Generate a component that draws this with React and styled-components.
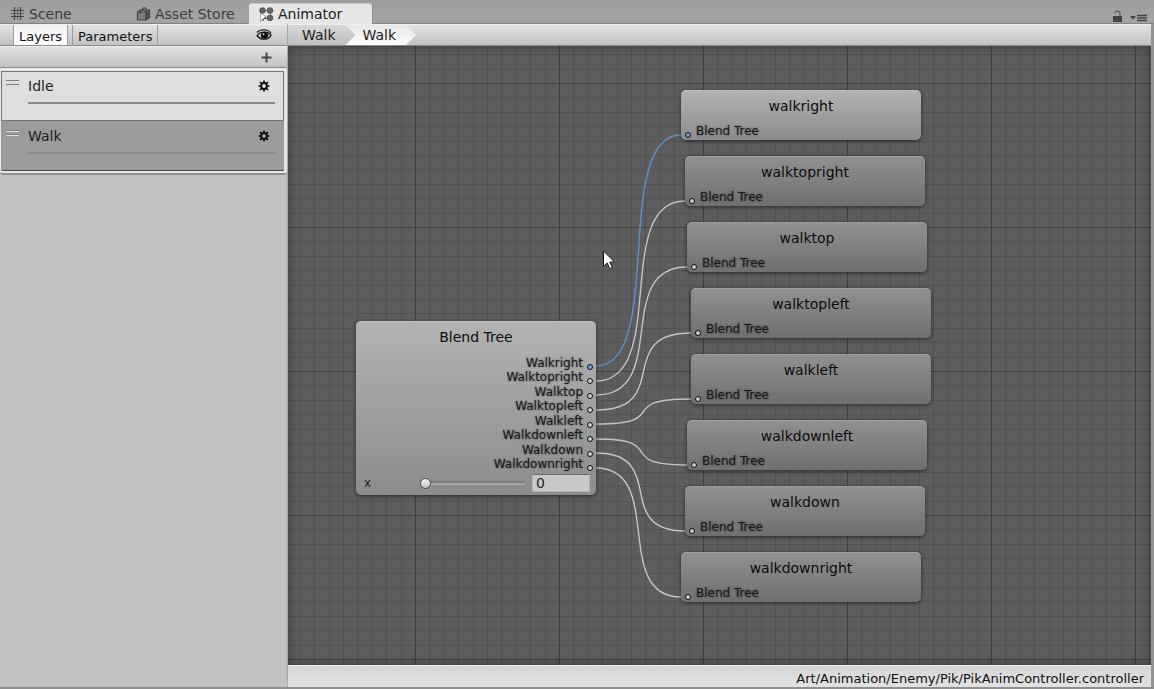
import React from "react";
import styled, { createGlobalStyle, css } from "styled-components";

const Global = createGlobalStyle`
  *, *::before, *::after { box-sizing: border-box; }
  body { margin: 0; background: #a2a2a2; }
  body, button, input { font-family: "DejaVu Sans", Verdana, sans-serif; font-size: 14px; color: #1c1c1c; }
  button { border: 0; padding: 0; background: none; display: flex; align-items: center; }
`;

const bar = css`
  background: linear-gradient(#e2e2e2, #c2c2c2);
  border-top: 1px solid #efefef;
  border-bottom: 1px solid #8a8a8a;
`;

const Window = styled.div`
  min-height: 100vh;
  display: flex;
  flex-direction: column;
  border-bottom: 2px solid #8e8e8e;
`;

const TabBar = styled.header`
  height: 24px;
  display: flex;
  align-items: flex-end;
  padding-right: 6px;
  background: linear-gradient(#9e9e9e, #a4a4a4);
  border-bottom: 1px solid #828282;
`;

const Tab = styled.button`
  height: 19px;
  width: ${(p) => p.$width}px;
  padding-left: 10px;
  gap: 4px;
  white-space: nowrap;
  color: ${(p) => (p.$active ? "#1c1c1c" : "#3c3c3c")};
  ${(p) =>
    p.$active &&
    css`
      background: #e6e6e6;
      border-radius: 3px 3px 0 0;
      box-shadow: 0 -1px 0 #c6c6c6, 1px 0 0 #8c8c8c;
      margin-bottom: -1px;
      height: 20px;
    `}
`;

const WindowTools = styled.div`
  margin-left: auto;
  display: flex;
  gap: 7px;
`;

const Body = styled.div`
  flex: 1;
  display: flex;
  border-right: 3px solid #959595;
`;

const Sidebar = styled.aside`
  width: 288px;
  flex-shrink: 0;
  background: #c2c2c2;
  border-right: 1px solid #a8a8a8;
`;

const SideBarRow = styled.div`
  ${bar}
  height: 22px;
  display: flex;
  align-items: stretch;
  padding-left: ${(p) => (p.$indent ? 13 : 0)}px;
  padding-right: 15px;
`;

const SideTab = styled.button`
  font-size: 13px;
  padding: 2px 5px 0;
  margin-right: 4px;
  color: #141414;
  border-left: 1px solid #9c9c9c;
  border-right: 1px solid #9c9c9c;
  ${(p) => p.$active && "background: linear-gradient(#f2f2f2, #ffffff);"}
`;

const IconButton = styled.button`
  justify-content: center;
  margin-left: auto;
`;

const LayerList = styled.ul`
  list-style: none;
  margin: 0;
  padding: 3px 3px 2px 1px;
  background: #e6e6e6;
  border-bottom: 2px solid #909090;
  border-radius: 0 0 3px 3px;
`;

const Layer = styled.li`
  height: 50px;
  padding: 4px 8px 0 4px;
  display: grid;
  grid-template-columns: 14px 1fr 17px;
  grid-template-rows: 20px 2px;
  column-gap: 8px;
  row-gap: 6px;
  border: 1px solid ${(p) => (p.$selected ? "#9b9b9b" : "#747474")};
  background: ${(p) => (p.$selected ? "#9b9b9b" : "#dedede")};
  border-bottom-color: ${(p) => (p.$selected ? "#4a4a4a" : "#747474")};
`;

const LayerName = styled.button``;

const GearButton = styled.button`
  justify-self: start;
`;

const Grip = styled.svg`
  margin-top: 3px;
`;

const Weight = styled.div`
  grid-column: 2 / 4;
  background: #8a8a8a;
  height: 2px;
`;

const Main = styled.main`
  flex: 1;
  min-width: 0;
  display: flex;
  flex-direction: column;
`;

const Crumbs = styled.nav`
  ${bar}
  height: 22px;
  display: flex;
`;

const Crumb = styled.button`
  height: 20px;
  padding: 0 20px 0 ${(p) => (p.$current ? 17 : 14)}px;
  margin-left: ${(p) => (p.$current ? -10 : 0)}px;
  background: ${(p) =>
    p.$current ? "linear-gradient(#e6e6e6, #ffffff)" : "linear-gradient(#d8d8d8, #bebebe)"};
  clip-path: ${(p) =>
    p.$current
      ? "polygon(0 0, calc(100% - 10px) 0, 100% 50%, calc(100% - 10px) 100%, 0 100%, 10px 50%)"
      : "polygon(0 0, calc(100% - 10px) 0, 100% 50%, calc(100% - 10px) 100%, 0 100%)"};
`;

const Canvas = styled.section`
  position: relative;
  flex: 1;
  overflow: hidden;
  background: #5d5d5d;
  box-shadow: inset 0 0 12px rgba(0, 0, 0, 0.4);
`;

const Drawing = styled.svg`
  position: absolute;
  inset: 0;
  width: 100%;
  height: 100%;
`;

const NodeBox = styled.article`
  position: absolute;
  left: ${(p) => p.$x}px;
  top: ${(p) => p.$y}px;
  width: 240px;
  display: flex;
  flex-direction: column;
  border-radius: 5px;
  background: ${(p) =>
    p.$lit ? "linear-gradient(#b3b3b3, #8c8c8c)" : "linear-gradient(#919191, #6f6f6f)"};
  box-shadow: inset 0 1px 0 rgba(255, 255, 255, 0.15), 0 1px 4px rgba(0, 0, 0, 0.6);
`;

const NodeTitle = styled.h2`
  margin: 0;
  height: 32px;
  line-height: 32px;
  font-size: 14px;
  font-weight: 400;
  text-align: center;
  color: #0c0c0c;
`;

const InputRow = styled.div`
  height: 18px;
  padding: 0 0 2px 4px;
  display: flex;
  align-items: flex-end;
  gap: 5px;
`;

const PortName = styled.span`
  font-size: 12px;
  line-height: 14px;
  color: #1a1a1a;
  text-shadow: 0 0 2px rgba(0, 0, 0, 0.5);
`;

const Port = styled.i`
  width: 6px;
  height: 6px;
  border-radius: 50%;
  border: 1px solid #0c0c0c;
  background: ${(p) => (p.$lit ? "#6fa4e0" : "#cccccc")};
`;

const Outputs = styled.ul`
  list-style: none;
  margin: 0;
  padding: 3px 3px 0 0;
  display: grid;
  grid-auto-rows: 15px 14px;
`;

const Output = styled.li`
  display: flex;
  align-items: flex-end;
  justify-content: flex-end;
  gap: 4px;
  padding-bottom: 1px;
`;

const BlendRow = styled.div`
  height: 20px;
  margin: 1px 0 2px;
  padding: 0 6px 0 8px;
  display: flex;
  align-items: center;
`;

const BlendLabel = styled.label`
  font-size: 12px;
  width: 56px;
`;

const Slider = styled.input`
  appearance: none;
  width: 105px;
  height: 12px;
  margin: 0 7px 0 0;
  background: linear-gradient(#6c6c6c, #b8b8b8) center / 100% 4px no-repeat;
  &::-webkit-slider-thumb {
    appearance: none;
    width: 11px;
    height: 11px;
    border-radius: 50%;
    border: 1px solid #4a4a4a;
    background: linear-gradient(#f4f4f4, #c0c0c0);
  }
`;

const ValueField = styled.input`
  width: 58px;
  height: 18px;
  padding: 0 3px;
  border: 1px solid #b4b4b4;
  border-top-color: #6a6a6a;
  background: #c8c8c8;
`;

const Status = styled.footer`
  height: 22px;
  padding: 4px 7px 0 0;
  text-align: right;
  font-size: 13px;
  line-height: 18px;
  color: #101010;
  background: linear-gradient(#d6d6d6, #e2e2e2);
  border-top: 1px solid #f0f0f0;
`;

const Pointer = styled.svg`
  position: absolute;
  left: 315px;
  top: 204px;
`;

const GridIcon = () => (
  <svg width="15" height="15" viewBox="0 0 15 15" stroke="#444" strokeWidth="1.2" aria-hidden="true">
    <path d="M4.5 1v13M10.5 1v13M1 4.5h13M1 10.5h13" />
    <path d="M7.5 1v13M1 7.5h13" strokeOpacity="0.6" />
  </svg>
);

const StoreIcon = () => (
  <svg width="15" height="14" viewBox="0 0 15 14" fill="none" stroke="#484848" strokeWidth="1.2" aria-hidden="true">
    <path d="M1.5 5h8.5v8h-8.5z" fill="#7e7e7e" />
    <path d="M10 5l3.5-2v7.5l-3.5 2.5z" fill="#555" />
    <path d="M1.5 5l3-2h9" />
    <path d="M4 6.5c0-5 4.500-5 4.500-1.500M6.500 2.500c.5-2.500 4-2 4 1" />
  </svg>
);

const AnimatorIcon = () => (
  <svg width="15" height="15" viewBox="0 0 15 15" aria-hidden="true">
    <path d="M4 3.5h7M11.5 4v7M11 11.5H4" stroke="#777" />
    <g fill="#666" stroke="#404040" strokeWidth=".8">
      <circle cx="3.5" cy="3.5" r="2.8" />
      <circle cx="11" cy="3.5" r="2.8" />
      <circle cx="11" cy="11" r="2.8" />
    </g>
    <path d="M1.5 6.5v8l5.5-5z" fill="#fff" stroke="#888" strokeWidth=".7" />
    <path d="M3.5 13.5l3.5-3.5" stroke="#555" strokeWidth="1.2" />
  </svg>
);

const EyeIcon = () => (
  <svg width="16" height="13" viewBox="0 0 16 13" aria-hidden="true">
    <path d="M1 3.5C4 0 12 0 15 4" fill="none" stroke="#2a2a2a" strokeWidth="1.3" />
    <path d="M1 6.5C4 2 12 2 15 6c-2 5-10 6-14 .5z" fill="#b8b8b8" stroke="#1a1a1a" strokeWidth="1.3" />
    <circle cx="8.5" cy="6.3" r="3.5" fill="#0c0c0c" />
    <circle cx="7.5" cy="5.2" r="1" fill="#ccc" />
  </svg>
);

const PlusIcon = () => (
  <svg width="11" height="11" viewBox="0 0 11 11" aria-hidden="true">
    <path d="M5.5 0.5v10M0.5 5.5h10" stroke="#444" strokeWidth="2" />
  </svg>
);

const GearIcon = () => (
  <svg width="12" height="12" viewBox="0 0 12 12" fill="none" stroke="#0c0c0c" aria-hidden="true">
    <circle cx="6" cy="6" r="2.9" strokeWidth="2" />
    <path d="M6 0.5v2M6 9.5v2M0.5 6h2M9.5 6h2M2 2l1.5 1.5M8.5 8.5L10 10M2 10l1.5-1.5M8.5 3.5L10 2" strokeWidth="1.7" />
  </svg>
);

const GripIcon = () => (
  <Grip width="13" height="8" viewBox="0 0 13 8" aria-hidden="true">
    <path d="M0 1.5h13M0 5.5h13" stroke="#808080" />
    <path d="M0 2.5h13M0 6.5h13" stroke="#dddddd" />
  </Grip>
);

const LockIcon = () => (
  <svg width="11" height="13" viewBox="0 0 11 13" aria-hidden="true">
    <path d="M1 6h9v6H1z" fill="#414141" />
    <path d="M8 6V3.5C8 0.5 3 0.5 3 3" fill="none" stroke="#5c5c5c" strokeWidth="1.3" />
  </svg>
);

const MenuIcon = () => (
  <svg width="18" height="10" viewBox="0 0 18 10" aria-hidden="true">
    <path d="M0 4h6L3 7.5z" fill="#414141" />
    <path d="M7 3.5h10M7 6h10M7 8.5h10" stroke="#444" strokeWidth="1.3" />
  </svg>
);

const children = [
  { name: "walkright", output: "Walkright", x: 393, y: 44, lit: true },
  { name: "walktopright", output: "Walktopright", x: 397, y: 110 },
  { name: "walktop", output: "Walktop", x: 399, y: 176 },
  { name: "walktopleft", output: "Walktopleft", x: 403, y: 242 },
  { name: "walkleft", output: "Walkleft", x: 403, y: 308 },
  { name: "walkdownleft", output: "Walkdownleft", x: 399, y: 374 },
  { name: "walkdown", output: "Walkdown", x: 397, y: 440 },
  { name: "walkdownright", output: "Walkdownright", x: 393, y: 506 },
];

const minorLines = [14, 29, 43, 58, 72, 86, 101, 115, 130];

const wire = (node, index) => {
  const startX = 308;
  const startY = 320 + Math.round((index * 29) / 2);
  const endY = node.y + 45;
  const reach = (node.x - startX) * 0.82;
  return `M${startX} ${startY}C${startX + reach} ${startY} ${node.x - reach} ${endY} ${node.x} ${endY}`;
};

const Graph = () => (
  <Drawing aria-hidden="true">
    <defs>
      <pattern id="grid" x="127" y="37" width="144" height="144" patternUnits="userSpaceOnUse">
        {minorLines.map((at) => (
          <path key={at} d={`M${at}.5 0v144M0 ${at}.5h144`} stroke="#000" strokeOpacity="0.12" />
        ))}
        <path d="M0.5 0v144M0 0.5h144" stroke="#000" strokeOpacity="0.3" />
      </pattern>
    </defs>
    <rect width="100%" height="100%" fill="url(#grid)" />
    {children.map((node, index) => (
      <path key={node.name} d={wire(node, index)} fill="none" stroke={node.lit ? "#5b91cf" : "#c4c4c4"} strokeWidth="1.4" />
    ))}
  </Drawing>
);

const LayerItem = ({ name, selected }) => (
  <Layer $selected={selected}>
    <GripIcon />
    <LayerName>{name}</LayerName>
    <GearButton aria-label={`${name} settings`}>
      <GearIcon />
    </GearButton>
    <Weight />
  </Layer>
);

export default function App() {
  return (
    <Window>
      <Global />
      <TabBar>
        <Tab $width={126}>
          <GridIcon />
          Scene
        </Tab>
        <Tab $width={123}>
          <StoreIcon />
          Asset Store
        </Tab>
        <Tab $width={123} $active>
          <AnimatorIcon />
          Animator
        </Tab>
        <WindowTools>
          <IconButton aria-label="Lock">
            <LockIcon />
          </IconButton>
          <IconButton aria-label="Menu">
            <MenuIcon />
          </IconButton>
        </WindowTools>
      </TabBar>
      <Body>
        <Sidebar>
          <SideBarRow $indent>
            <SideTab $active>Layers</SideTab>
            <SideTab>Parameters</SideTab>
            <IconButton aria-label="Visibility">
              <EyeIcon />
            </IconButton>
          </SideBarRow>
          <SideBarRow>
            <IconButton aria-label="Add layer">
              <PlusIcon />
            </IconButton>
          </SideBarRow>
          <LayerList>
            <LayerItem name="Idle" />
            <LayerItem name="Walk" selected />
          </LayerList>
        </Sidebar>
        <Main>
          <Crumbs>
            <Crumb>Walk</Crumb>
            <Crumb $current>Walk</Crumb>
          </Crumbs>
          <Canvas>
            <Graph />
            <NodeBox $x={68} $y={275} $lit>
              <NodeTitle>Blend Tree</NodeTitle>
              <Outputs>
                {children.map((node) => (
                  <Output key={node.name}>
                    <PortName>{node.output}</PortName>
                    <Port $lit={node.lit} />
                  </Output>
                ))}
              </Outputs>
              <BlendRow>
                <BlendLabel htmlFor="blend-x">x</BlendLabel>
                <Slider id="blend-x" type="range" min="0" max="1" step="0.01" defaultValue="0" />
                <ValueField aria-label="x value" defaultValue="0" />
              </BlendRow>
            </NodeBox>
            {children.map((node) => (
              <NodeBox key={node.name} $x={node.x} $y={node.y} $lit={node.lit}>
                <NodeTitle>{node.name}</NodeTitle>
                <InputRow>
                  <Port $lit={node.lit} />
                  <PortName>Blend Tree</PortName>
                </InputRow>
              </NodeBox>
            ))}
            <Pointer width="12" height="20" viewBox="0 0 12 20" aria-hidden="true">
              <path d="M0.5 1v15.5l3.7-3.5 2.6 5.7 2.5-1.1-2.5-5.6h4.7z" fill="#fff" stroke="#15151f" />
            </Pointer>
          </Canvas>
          <Status>Art/Animation/Enemy/Pik/PikAnimController.controller</Status>
        </Main>
      </Body>
    </Window>
  );
}
